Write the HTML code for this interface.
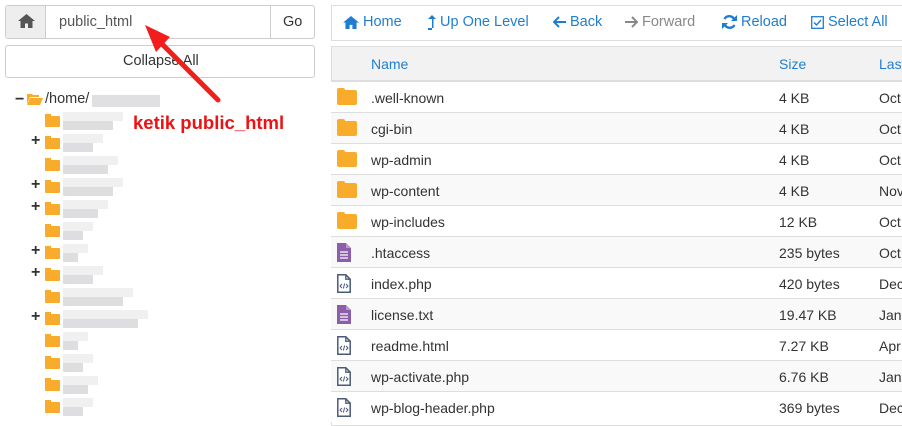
<!DOCTYPE html>
<html><head><meta charset="utf-8"><style>
*{box-sizing:border-box;margin:0;padding:0}
body{width:902px;height:416px;overflow:hidden;background:#fff;font-family:"Liberation Sans",sans-serif;position:relative;color:#333}
.abs{position:absolute}
.btn{border:1px solid #ccc;border-radius:3px;background:#fff}
.tb{position:absolute;top:14px;font-size:14.5px;color:#1f7ed0;white-space:nowrap;display:flex;align-items:center;gap:4px}
.row{position:absolute;left:331px;width:571px;height:31px;border-top:1px solid #ddd;font-size:14px;color:#333}
.row span{position:absolute;top:8px}
.row .n{left:40px}.row .s{left:448px}.row .d{left:548px}
.fold{position:absolute;left:6px;top:8px;width:20px;height:15px;background:#f9ac2c;border-radius:2px}
.fold:before{content:"";position:absolute;left:0;top:-2px;width:8px;height:4px;background:#f9ac2c;border-radius:2px 2px 0 0}
.tf{position:absolute;width:15px;height:11px;background:#f9ac2c;border-radius:1px}
.tf:before{content:"";position:absolute;left:0;top:-2px;width:6px;height:3px;background:#f9ac2c}
.blur{position:absolute;background:#d3d3d6}
.plus{position:absolute;font-size:16px;font-weight:bold;color:#333;left:31px}
</style></head><body>
<div class="abs btn" style="left:5px;top:5px;width:310px;height:34px"></div>
<div class="abs" style="left:6px;top:6px;width:40px;height:32px;background:#eee;border-right:1px solid #ccc;border-radius:3px 0 0 3px"></div>
<svg class="abs" style="left:18px;top:14px" width="17" height="14" viewBox="0 0 17 14"><path d="M8.5 0L0 7h2.5v7h4.5v-4.5h3V14h4.5V7H17z" fill="#555"/></svg>
<div class="abs" style="left:59px;top:14px;font-size:14.5px;color:#555">public_html</div>
<div class="abs" style="left:270px;top:6px;width:1px;height:32px;background:#ccc"></div>
<div class="abs" style="left:283px;top:14px;font-size:14.5px;color:#333">Go</div>
<div class="abs btn" style="left:5px;top:45px;width:310px;height:33px"></div>
<div class="abs" style="left:123px;top:53px;font-size:14.5px;color:#333">Collapse All</div>
<div class="abs" style="left:15px;top:91px;font-size:16px;font-weight:bold">−</div>
<svg class="abs" style="left:27px;top:93px" width="16" height="12" viewBox="0 0 16 12"><path d="M0 1h5l1 1h6v2H3L0 11z" fill="#f9ac2c"/><path d="M3 5h13l-3 7H0z" fill="#f9ac2c"/></svg>
<div class="abs" style="left:45px;top:91px;font-size:14.5px;color:#333">/home/</div>
<div class="blur" style="left:92px;top:95px;width:68px;height:12px;opacity:.7"></div>
<div id="tree"></div>
<svg class="abs" style="left:0;top:0" width="330" height="160"><line x1="218" y1="100" x2="156" y2="38" stroke="#f21d1d" stroke-width="5" stroke-linecap="round"/><path d="M145 25L170 37L156 52Z" fill="#f21d1d"/></svg>
<div class="abs" style="left:133px;top:112px;font-size:18.5px;font-weight:bold;color:#ee1111;text-shadow:1px 1px 0 #fff,-1px -1px 0 #fff,1px -1px 0 #fff,-1px 1px 0 #fff;white-space:nowrap">ketik public_html</div>
<div class="abs" style="left:331px;top:5px;width:580px;height:36px;border:1px solid #ddd"></div>
<div class="tb" style="left:343px"><svg width="16" height="13" viewBox="0 0 17 14"><path d="M8.5 0L0 7h2.5v7h4.5v-4.5h3V14h4.5V7H17z" fill="#1f7ed0"/></svg>Home</div>
<div class="tb" style="left:428px"><svg width="8" height="15" viewBox="0 0 8 15"><path d="M4 0L8 4H5.5v9H0v2h4V4H0z" fill="#1f7ed0"/></svg>Up One Level</div>
<div class="tb" style="left:553px"><svg width="13" height="12" viewBox="0 0 13 12"><path d="M6 1L1 6l5 5M1 6h12" stroke="#1f7ed0" stroke-width="2" fill="none"/></svg>Back</div>
<div class="tb" style="left:625px;color:#888"><svg width="13" height="12" viewBox="0 0 13 12"><path d="M7 1l5 5-5 5M12 6H0" stroke="#888" stroke-width="2" fill="none"/></svg>Forward</div>
<div class="tb" style="left:722px"><svg width="15" height="14" viewBox="0 0 15 14"><path d="M12.5 5A5.5 5.5 0 0 0 2.5 4M2.5 9a5.5 5.5 0 0 0 10 1" stroke="#1f7ed0" stroke-width="2.4" fill="none"/><path d="M15 0v6H9zM0 14V8h6z" fill="#1f7ed0"/></svg>Reload</div>
<div class="tb" style="left:811px"><svg width="13" height="13" viewBox="0 0 13 13"><rect x=".7" y=".7" width="11.6" height="11.6" fill="none" stroke="#1f7ed0" stroke-width="1.3"/><path d="M3 6.5l2.5 2.5L10 4" stroke="#1f7ed0" stroke-width="1.4" fill="none"/></svg>Select All</div>
<div class="abs" style="left:331px;top:46px;width:580px;height:380px;border:1px solid #ddd"></div>
<div class="abs" style="left:332px;top:47px;width:570px;height:34px;background:#f2f2f2;border-bottom:1px solid #ddd"></div>
<div class="abs" style="left:371px;top:56px;font-size:14px;color:#1f7ed0">Name</div>
<div class="abs" style="left:779px;top:56px;font-size:14px;color:#1f7ed0">Size</div>
<div class="abs" style="left:879px;top:56px;font-size:14px;color:#1f7ed0">Last</div>
<div id="rows"></div>
<script>
var R=[["f",".well-known","4 KB","Oct"],["f","cgi-bin","4 KB","Oct"],["f","wp-admin","4 KB","Oct"],["f","wp-content","4 KB","Nov"],["f","wp-includes","12 KB","Oct"],["t",".htaccess","235 bytes","Oct"],["c","index.php","420 bytes","Dec"],["t","license.txt","19.47 KB","Jan"],["c","readme.html","7.27 KB","Apr"],["c","wp-activate.php","6.76 KB","Jan"],["c","wp-blog-header.php","369 bytes","Dec"]];
var h="";R.forEach(function(r,i){var y=81+i*31,ic;
if(r[0]=="f")ic='<div class="fold"></div>';
else if(r[0]=="t")ic='<svg style="position:absolute;left:6px;top:6px" width="14" height="19" viewBox="0 0 14 19"><path d="M0 0h9l5 5v14H0z" fill="#8a5ea8"/><path d="M9 0v5h5" fill="#b99acb"/><path d="M3 9h8M3 12h8M3 15h8" stroke="#fff" stroke-width="1.2"/></svg>';
else ic='<svg style="position:absolute;left:6px;top:6px" width="14" height="19" viewBox="0 0 14 19"><path d="M.8.8h8l4.4 4.4v13H.8z" fill="#fff" stroke="#4a5a78" stroke-width="1.5"/><path d="M8.8.8v4.4h4.4" fill="none" stroke="#4a5a78" stroke-width="1.3"/><path d="M5 10l-2 2 2 2M9 10l2 2-2 2M7.6 9.5l-1.2 5" stroke="#4a5a78" stroke-width="1" fill="none"/></svg>';
h+='<div class="row" style="top:'+y+'px;background:'+(i%2?"#f9f9f9":"#fff")+'">'+ic+'<span class="n">'+r[1]+'</span><span class="s">'+r[2]+'</span><span class="d">'+r[3]+'</span></div>';});
document.getElementById("rows").innerHTML=h;
var t="",plus=[1,3,4,6,7,9],w=[60,40,55,60,45,30,25,40,70,85,25,30,35,30];
for(var i=0;i<14;i++){var y=116+i*22;t+='<div class="tf" style="left:45px;top:'+y+'px"></div>';
if(plus.indexOf(i)>=0)t+='<div class="plus" style="top:'+(y-6)+'px">+</div>';
t+='<div class="blur" style="left:63px;top:'+(y-4)+'px;width:'+w[i]+'px;height:9px;opacity:.35"></div><div class="blur" style="left:63px;top:'+(y+5)+'px;width:'+(w[i]-10)+'px;height:9px;opacity:.75"></div>';}
document.getElementById("tree").innerHTML=t;
</script>
</body></html>
